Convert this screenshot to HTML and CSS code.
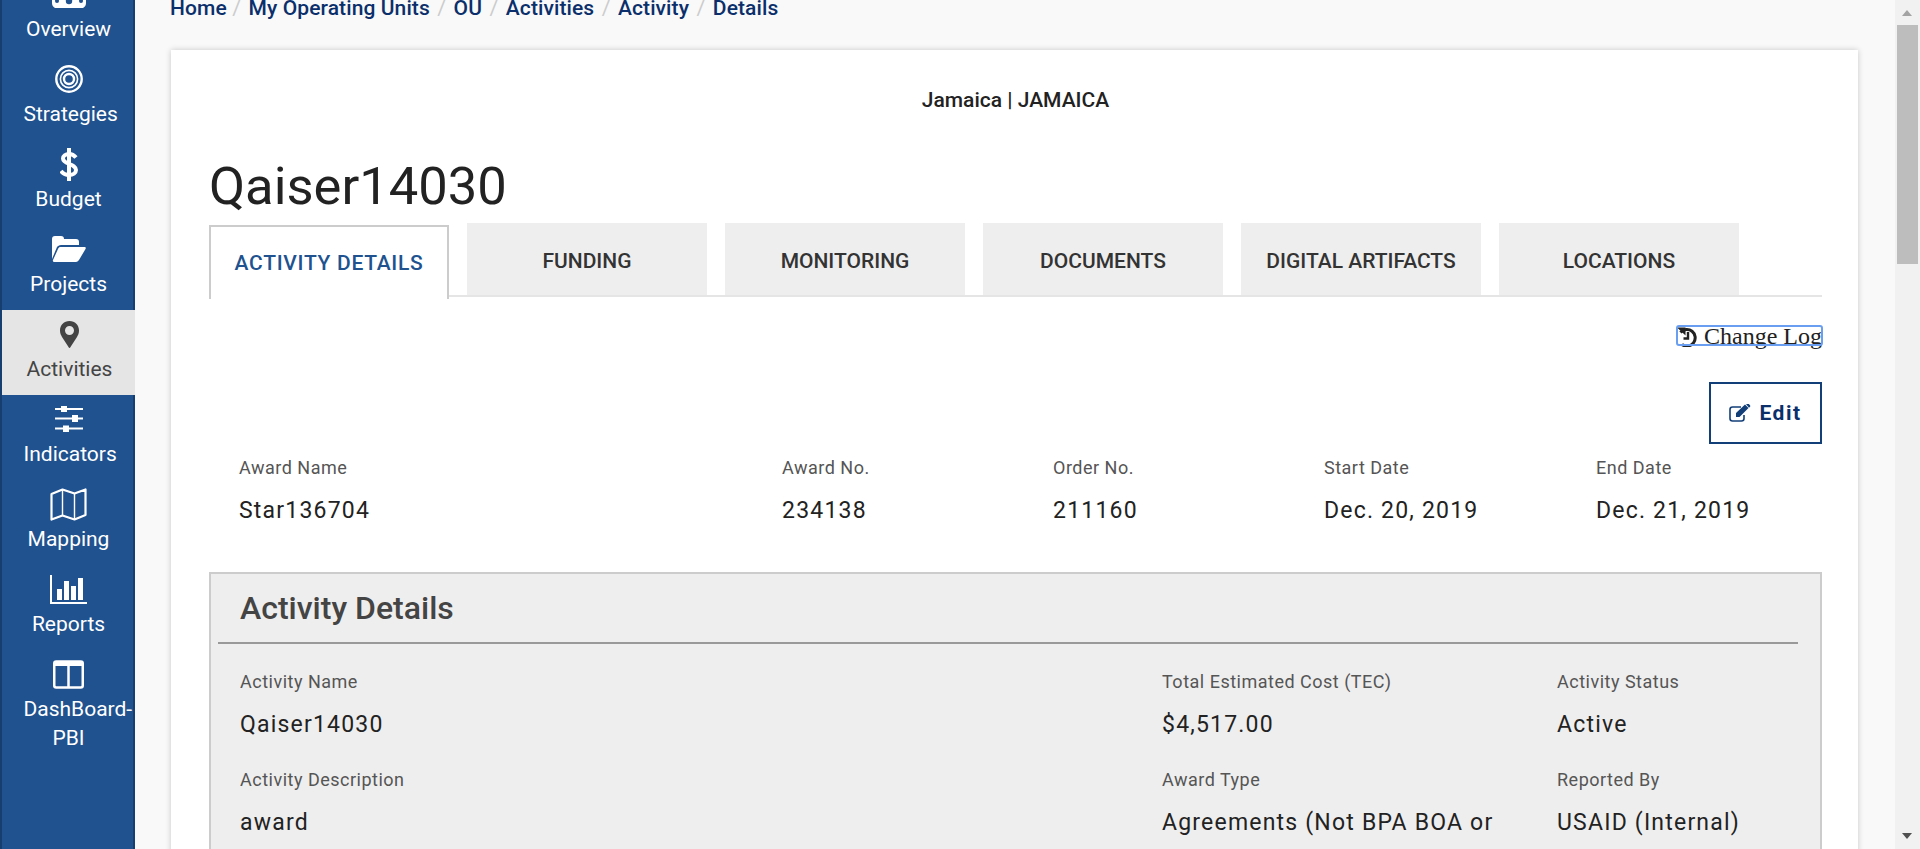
FILE: index.html
```html
<!DOCTYPE html>
<html lang="en">
<head>
    <meta charset="UTF-8">
    <title>Activity Details</title>
    <link rel="stylesheet" href="styles.css">
</head>
<body>
    <div class="app">
        <nav class="sidebar">
            <a class="nav-item">
                <span class="nav-icon">
                    <svg width="34" height="28" viewBox="0 0 34 28"><path fill="#fff" d="M0 12h34v11c0 2-1 4-3 5H3c-2-1-3-3-3-5z"/><circle cx="17" cy="21" r="3.2" fill="#20528f"/><circle cx="5" cy="21" r="2" fill="#20528f"/><circle cx="29" cy="21" r="2" fill="#20528f"/></svg>
                </span>
                <span class="nav-label">Overview</span>
            </a>
            <a class="nav-item">
                <span class="nav-icon">
                    <svg width="28" height="28" viewBox="0 0 28 28" fill="none" stroke="#fff"><circle cx="14" cy="14" r="12.7" stroke-width="2.4"/><circle cx="14" cy="14" r="8.6" stroke-width="1.6"/><circle cx="14" cy="14" r="5" stroke-width="2.4"/></svg>
                </span>
                <span class="nav-label">Strategies</span>
            </a>
            <a class="nav-item">
                <span class="nav-icon">
                    <svg width="18" height="33" viewBox="0 0 18 33"><path fill="none" stroke="#fff" stroke-width="4" d="M16 9.500C14 7 11.500 6 9 6 5.500 6 3 8 3 10.500c0 6 13 5 13 11.500 0 3-3 5-7 5-3 0-6-1.500-8-4"/><path fill="#fff" d="M7 0h4v33H7z"/></svg>
                </span>
                <span class="nav-label">Budget</span>
            </a>
            <a class="nav-item">
                <span class="nav-icon">
                    <svg width="34" height="26" viewBox="0 0 34 26" fill="#fff"><path d="M0 23V3c0-2 1-3 3-3h6c2 0 3 1 3 3h12c2 0 3 1 3 3v3H9c-2 0-3 1-4 2z"/><path d="M8 11h24c2 0 2 1 1.500 2L27 24c-1 1-2 2-3 2H3c-2 0-2.500-1-2-2l5-11c.5-1 1-2 2-2z"/></svg>
                </span>
                <span class="nav-label">Projects</span>
            </a>
            <a class="nav-item active">
                <span class="nav-icon">
                    <svg width="19" height="27" viewBox="0 0 19 27"><path fill="#444" fill-rule="evenodd" d="M9.500 0C15 0 19 4 19 9.500c0 3-1 4.500-2 6.500L10.500 26c-.5 1.300-1.500 1.300-2 0L2 16C1 14 0 12.500 0 9.500 0 4 4 0 9.500 0zm0 5a4.500 4.500 0 1 0 0 9 4.500 4.500 0 0 0 0-9z"/></svg>
                </span>
                <span class="nav-label">Activities</span>
            </a>
            <a class="nav-item">
                <span class="nav-icon">
                    <svg width="28" height="26" viewBox="0 0 28 26" fill="#fff"><path d="M0 2h28v2H0zM0 11.500h28v2H0zM0 21.500h28v2H0z"/><path d="M6 0h6v6H6zM17 9h6v7h-6zM8 19.500h6V26H8z"/></svg>
                </span>
                <span class="nav-label">Indicators</span>
            </a>
            <a class="nav-item">
                <span class="nav-icon">
                    <svg width="37" height="33" viewBox="0 0 37 33" fill="none" stroke="#fff" stroke-width="2.200" stroke-linejoin="round"><path d="M1.500 6 12.500 1.500 24.500 5.500 35.500 1.500V27L24.500 31.500 12.500 27.500 1.500 31.500z"/><path d="M12.500 1.500v26M24.500 5.500v26" stroke-width="1.400"/></svg>
                </span>
                <span class="nav-label">Mapping</span>
            </a>
            <a class="nav-item">
                <span class="nav-icon">
                    <svg width="37" height="29" viewBox="0 0 37 29" fill="#fff"><path d="M0 0h2v27h35v2H0z"/><path d="M7 14h5v11H7zM14 6h5v19h-5zM21 11h5v14h-5zM28 3h5v22h-5z"/></svg>
                </span>
                <span class="nav-label">Reports</span>
            </a>
            <a class="nav-item">
                <span class="nav-icon">
                    <svg width="31" height="29" viewBox="0 0 31 29" fill="none" stroke="#fff"><rect x="1.250" y="1.500" width="28.500" height="26" rx="2" stroke-width="2.500"/><path d="M1 4h29" stroke-width="4"/><path d="M15.500 2v26" stroke-width="2.500"/></svg>
                </span>
                <span class="nav-label">DashBoard-PBI</span>
            </a>
        </nav>

        <main class="content">
            <ul class="breadcrumb">
                <li>Home</li>
                <li>My Operating Units</li>
                <li>OU</li>
                <li>Activities</li>
                <li>Activity</li>
                <li>Details</li>
            </ul>

            <section class="card">
                <p class="ou-name">Jamaica | JAMAICA</p>
                <h1 class="activity-title">Qaiser14030</h1>

                <div class="tabs">
                    <a class="tab active">ACTIVITY DETAILS</a>
                    <a class="tab">FUNDING</a>
                    <a class="tab">MONITORING</a>
                    <a class="tab">DOCUMENTS</a>
                    <a class="tab">DIGITAL ARTIFACTS</a>
                    <a class="tab">LOCATIONS</a>
                </div>

                <div class="tools">
                    <a class="change-log">
                        <svg width="20" height="20" viewBox="0 0 20 20" fill="none" stroke="#222"><path d="M3.500 5.500A8.300 8.300 0 1 1 5 17.500" stroke-width="3"/><path d="M0 .5h8.500v8z" fill="#222" stroke="none"/><path d="M11 5v6.500H6.500" stroke-width="2.400"/></svg>
                        Change Log
                    </a>
                    <a class="edit-btn">
                        <svg width="22" height="18" viewBox="0 0 22 18"><path fill="none" stroke="#123f78" stroke-width="1.600" d="M15 11v3.500c0 1.500-1 2.500-2.500 2.500h-9C2 17 1 16 1 14.500v-9C1 4 2 3 3.500 3H12"/><path fill="#123f78" d="M7 9 16 .5l3.500 3.500L10.500 13H7zM17 0l1-.5c.5-.2 1-.2 1.500.2l1.500 1.500c.4.500.4 1 0 1.500l-1 1z"/></svg>
                        Edit
                    </a>
                </div>

                <div class="award-row">
                    <div class="field">
                        <div class="field-label">Award Name</div>
                        <div class="field-value">Star136704</div>
                    </div>
                    <div class="field">
                        <div class="field-label">Award No.</div>
                        <div class="field-value">234138</div>
                    </div>
                    <div class="field">
                        <div class="field-label">Order No.</div>
                        <div class="field-value">211160</div>
                    </div>
                    <div class="field">
                        <div class="field-label">Start Date</div>
                        <div class="field-value">Dec. 20, 2019</div>
                    </div>
                    <div class="field">
                        <div class="field-label">End Date</div>
                        <div class="field-value">Dec. 21, 2019</div>
                    </div>
                </div>

                <div class="panel">
                    <h2 class="panel-title">Activity Details</h2>
                    <div class="panel-grid">
                        <div class="field">
                            <div class="field-label">Activity Name</div>
                            <div class="field-value">Qaiser14030</div>
                        </div>
                        <div class="field">
                            <div class="field-label">Total Estimated Cost (TEC)</div>
                            <div class="field-value">$4,517.00</div>
                        </div>
                        <div class="field">
                            <div class="field-label">Activity Status</div>
                            <div class="field-value">Active</div>
                        </div>
                        <div class="field">
                            <div class="field-label">Activity Description</div>
                            <div class="field-value">award</div>
                        </div>
                        <div class="field">
                            <div class="field-label">Award Type</div>
                            <div class="field-value">Agreements (Not BPA BOA or Leases)</div>
                        </div>
                        <div class="field">
                            <div class="field-label">Reported By</div>
                            <div class="field-value">USAID (Internal)</div>
                        </div>
                    </div>
                </div>
            </section>
        </main>

        <div class="scrollbar">
            <span class="arrow-up"></span>
            <span class="thumb"></span>
            <span class="arrow-down"></span>
        </div>
    </div>
</body>
</html>
```

FILE: styles.css
```css
* {
    box-sizing: border-box;
}

html, body {
    margin: 0;
    height: 849px;
    overflow: hidden;
}

body {
    background-color: #f9f9f9;
    font-family: Roboto, sans-serif;
    color: #222;
}

.app {
    display: flex;
    height: 849px;
}

/* left nav */
.sidebar {
    width: 135px;
    flex: none;
    background-color: #20528f;
    border-left: 2px solid #163f6f;
    border-right: 2px solid #163f6f;
}

.nav-item {
    display: block;
    height: 85px;
    padding: 3px 0 0 2px;
    color: #fff;
    text-align: center;
}

.nav-item:first-child {
    margin-top: -30px;
}

.nav-item.active {
    position: relative;
    margin-right: -2px;
    background-color: #e5e5e5;
    color: #444;
}

.nav-icon {
    display: flex;
    height: 42px;
    align-items: center;
    justify-content: center;
}

.nav-label {
    display: block;
    width: 90px;
    margin: 0 auto;
    font-size: 21px;
    line-height: 29px;
}

/* main area */
.content {
    flex: 1;
    min-width: 0;
    padding: 0 37px 0 36px;
}

.breadcrumb {
    display: flex;
    height: 50px;
    margin: -5px 0 0 -1px;
    padding: 0;
    list-style: none;
    font-size: 21px;
    font-weight: 500;
    line-height: 26px;
    letter-spacing: 0.1px;
    color: #0b2f6b;
}

.breadcrumb li + li::before {
    content: "/";
    padding: 0 7.500px;
    font-weight: 400;
    color: #ccc;
}

.breadcrumb li:nth-child(2) {
    margin-left: -2px;
}

.card {
    height: 900px;
    margin: 5px 0 0;
    padding: 0 36px 0 38px;
    background-color: #fff;
    box-shadow: 0 0 6px rgba(0, 0, 0, 0.2);
}

.ou-name {
    margin: 0;
    padding-top: 39px;
    font-size: 21px;
    font-weight: 500;
    line-height: 22px;
    text-align: center;
}

.activity-title {
    margin: 39px 0 1px;
    font-size: 52.500px;
    font-weight: 400;
    line-height: 72px;
}

/* tabs */
.tabs {
    display: flex;
    gap: 18px;
    height: 74px;
    border-bottom: 2px solid #e5e5e5;
}

.tab {
    display: flex;
    width: 240px;
    height: 72px;
    padding-top: 3px;
    align-items: center;
    justify-content: center;
    background-color: #eee;
    font-size: 21px;
    font-weight: 500;
    color: #333;
}

.tab.active {
    height: 74px;
    margin-top: 2px;
    padding-top: 0;
    border: 2px solid #ccc;
    border-bottom: none;
    background-color: #fff;
    color: #20528f;
    letter-spacing: 0.7px;
}

.tools {
    display: flex;
    flex-direction: column;
    align-items: flex-end;
}

.change-log {
    display: flex;
    align-items: center;
    gap: 7px;
    height: 19px;
    margin-top: 29px;
    padding-top: 2px;
    border-radius: 2px;
    outline: 2px solid #6a9ef0;
    outline-offset: -1px;
    font-family: "Liberation Serif", serif;
    font-size: 24px;
    color: #222;
}

.edit-btn {
    display: flex;
    width: 113px;
    height: 62px;
    margin-top: 37px;
    align-items: center;
    justify-content: center;
    gap: 8px;
    border: 2px solid #123f78;
    font-size: 21px;
    font-weight: 700;
    letter-spacing: 1.500px;
    color: #0b2f6b;
}

/* fields */
.field-label {
    font-size: 18px;
    line-height: 22px;
    letter-spacing: 0.5px;
    color: #555;
}

.field-value {
    margin-top: 19px;
    font-size: 23px;
    line-height: 26px;
    letter-spacing: 1.200px;
    color: #222;
}

.award-row {
    display: grid;
    grid-template-columns: 543px 271px 271px 272px 1fr;
    margin-top: 13px;
    padding-left: 30px;
}

.panel {
    margin-top: 48px;
    padding: 0 22px 0 7px;
    border: 2px solid #ccc;
    background-color: #eee;
}

.panel-title {
    margin: 0;
    padding: 13px 0 13px 22px;
    border-bottom: 2px solid #999;
    font-size: 32px;
    font-weight: 500;
    line-height: 42px;
    color: #444;
}

.panel-grid {
    display: grid;
    grid-template-columns: 922px 395px 1fr;
    row-gap: 23px;
    padding: 27px 0 0 22px;
}

.panel-grid .field:nth-child(3n+2) .field-value {
    width: 360px;
    margin-top: 11px;
    line-height: 42px;
}

/* fake window scrollbar, the page is a still image of a scrolled state */
.scrollbar {
    position: relative;
    width: 25px;
    flex: none;
    background-color: #f1f1f1;
}

.arrow-up,
.arrow-down {
    position: absolute;
    left: 7px;
    border-left: 5px solid transparent;
    border-right: 5px solid transparent;
}

.arrow-up {
    top: 10px;
    border-bottom: 6px solid #a3a3a3;
}

.arrow-down {
    bottom: 10px;
    border-top: 6px solid #505050;
}

.thumb {
    position: absolute;
    top: 25px;
    left: 2px;
    width: 21px;
    height: 239px;
    background-color: #bdbdbd;
}
```
